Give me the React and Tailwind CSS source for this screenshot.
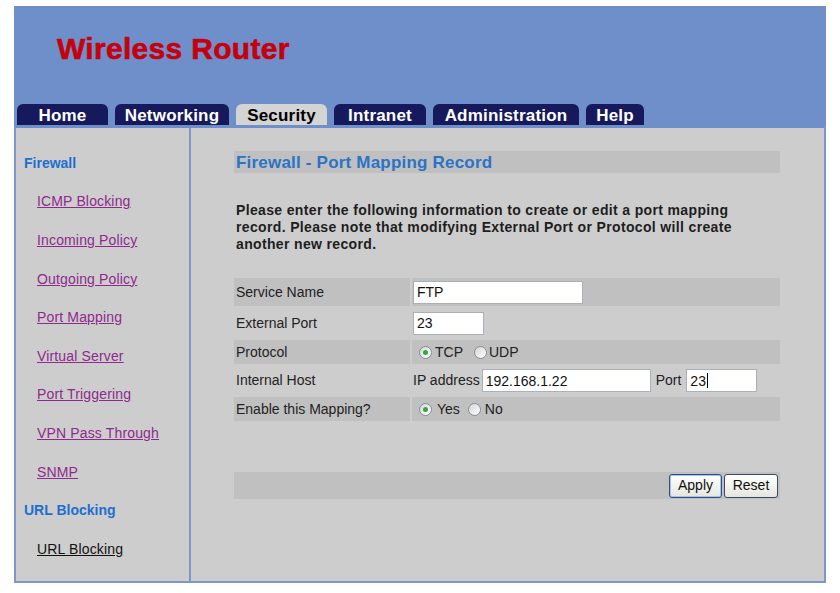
import React from "react";

const tabs = [
  { label: "Home", w: "w-[91px]" },
  { label: "Networking", w: "w-[114px]" },
  { label: "Security", w: "w-[91px]", active: true },
  { label: "Intranet", w: "w-[92px]" },
  { label: "Administration", w: "w-[146px]" },
  { label: "Help", w: "w-[58px]" },
];

const side = [
  { t: "Firewall", h: true },
  { t: "ICMP Blocking" },
  { t: "Incoming Policy" },
  { t: "Outgoing Policy" },
  { t: "Port Mapping" },
  { t: "Virtual Server" },
  { t: "Port Triggering" },
  { t: "VPN Pass Through" },
  { t: "SNMP" },
  { t: "URL Blocking", h: true },
  { t: "URL Blocking", black: true },
];

function Radio({ checked }) {
  return (
    <span className="inline-flex items-center justify-center w-[13px] h-[13px] rounded-full border border-[#7f8e9e] bg-gradient-to-br from-[#d6d6d6] to-white">
      {checked && <span className="w-[5px] h-[5px] rounded-full bg-[#3aa63a]" />}
    </span>
  );
}

function Input({ w, value, caret }) {
  return (
    <div className={`${w} h-[23px] bg-white border border-[#a9b0b8] flex items-center pl-[3px] text-[14px] text-[#111] leading-none`}>
      {value}
      {caret && <span className="inline-block w-[1px] h-[15px] bg-black ml-[1px]" />}
    </div>
  );
}

export default function App() {
  return (
    <div className="w-[840px] h-[593px] bg-white pt-[6px] pl-[14px]" style={{ fontFamily: '"Liberation Sans", Arial, sans-serif' }}>
      <div className="w-[812px]">
        {/* header */}
        <div className="h-[119px] bg-[#6f8fcb] flex flex-col">
          <div className="pl-[43px] pt-[28px] h-[98px]">
            <span className="text-[30px] font-bold text-[#c6000c] leading-none tracking-[0.3px] [-webkit-text-stroke:0.6px_#c6000c]">
              Wireless Router
            </span>
          </div>
          <div className="flex items-end gap-[7px] pl-[3px] h-[21px]">
            {tabs.map((t) => (
              <div
                key={t.label}
                className={`${t.w} h-[21px] rounded-t-[6px] flex items-center justify-center text-[17px] font-bold leading-none pt-[2px] tracking-[0.2px] ${
                  t.active ? "bg-[#d4d4d4] text-black" : "bg-[#161a5c] text-white"
                }`}
              >
                {t.label}
              </div>
            ))}
          </div>
        </div>
        {/* body */}
        <div className="flex h-[458px] bg-[#cdcdcd] border-t-[3px] border-t-[#6f8fcb] border-l-2 border-r-2 border-b-2 border-[#7f96cc]">
          <div className="w-[175px] border-r-2 border-[#7f96cc] pt-[16px] pl-[8px]">
            {side.map((s, i) => (
              <div key={i} className="h-[38.6px] flex items-center">
                {s.h ? (
                  <span className="text-[14px] font-bold text-[#1c6fd1]">{s.t}</span>
                ) : (
                  <span className={`ml-[13px] text-[14px] underline tracking-[0.15px] ${s.black ? "text-[#111]" : "text-[#8e2a8e]"}`}>
                    {s.t}
                  </span>
                )}
              </div>
            ))}
          </div>
          <div className="flex-1 pl-[43px] pr-[44px] pt-[23px]">
            <div className="h-[22px] bg-[#c0c0c0] flex items-center pl-[2px]">
              <span className="text-[17px] font-bold text-[#2a73c6] leading-none tracking-[0.2px]">Firewall - Port Mapping Record</span>
            </div>
            <p className="mt-[29px] pl-[2px] text-[14px] font-bold text-[#1e1e1e] leading-[17px] tracking-[0.35px]">
              Please enter the following information to create or edit a port mapping
              <br />
              record. Please note that modifying External Port or Protocol will create
              <br />
              another new record.
            </p>
            <div className="mt-[25px] flex flex-col gap-[2px] text-[14px] text-[#222]">
              <div className="flex h-[28px] gap-[2px]">
                <div className="w-[176px] bg-[#c0c0c0] flex items-center pl-[2px]">Service Name</div>
                <div className="flex-1 bg-[#c0c0c0] flex items-center pl-[1px]">
                  <Input w="w-[170px]" value="FTP" />
                </div>
              </div>
              <div className="flex h-[30px] gap-[2px]">
                <div className="w-[176px] flex items-center pl-[2px]">External Port</div>
                <div className="flex-1 flex items-center pl-[1px]">
                  <Input w="w-[71px]" value="23" />
                </div>
              </div>
              <div className="flex h-[24px] gap-[2px]">
                <div className="w-[176px] bg-[#c0c0c0] flex items-center pl-[2px]">Protocol</div>
                <div className="flex-1 bg-[#c0c0c0] flex items-center pl-[7px]">
                  <Radio checked />
                  <span className="ml-[3px]">TCP</span>
                  <span className="ml-[11px] flex"><Radio /></span>
                  <span className="ml-[2px]">UDP</span>
                </div>
              </div>
              <div className="flex h-[29px] gap-[2px]">
                <div className="w-[176px] flex items-center pl-[2px]">Internal Host</div>
                <div className="flex-1 flex items-center pl-[1px]">
                  <span className="mr-[2px]">IP address</span>
                  <Input w="w-[169px]" value="192.168.1.22" />
                  <span className="ml-[5px] mr-[5px]">Port</span>
                  <Input w="w-[71px]" value="23" caret />
                </div>
              </div>
              <div className="flex h-[24px] gap-[2px]">
                <div className="w-[176px] bg-[#c0c0c0] flex items-center pl-[2px]">Enable this Mapping?</div>
                <div className="flex-1 bg-[#c0c0c0] flex items-center pl-[7px]">
                  <Radio checked />
                  <span className="ml-[5px]">Yes</span>
                  <span className="ml-[8px] flex"><Radio /></span>
                  <span className="ml-[4px]">No</span>
                </div>
              </div>
            </div>
            <div className="mt-[51px] h-[27px] bg-[#c0c0c0] flex items-center justify-end pr-[2px] gap-[2px]">
              <button className="w-[53px] h-[24px] rounded-[3px] border border-[#2c4e8c] bg-gradient-to-b from-white to-[#e6e6e0] text-[14px] text-[#111] shadow-[inset_0_0_0_1px_#a9c2ec]">
                Apply
              </button>
              <button className="w-[54px] h-[24px] rounded-[3px] border border-[#3b4a62] bg-gradient-to-b from-white to-[#e6e6e0] text-[14px] text-[#111]">
                Reset
              </button>
            </div>
          </div>
        </div>
      </div>
    </div>
  );
}
